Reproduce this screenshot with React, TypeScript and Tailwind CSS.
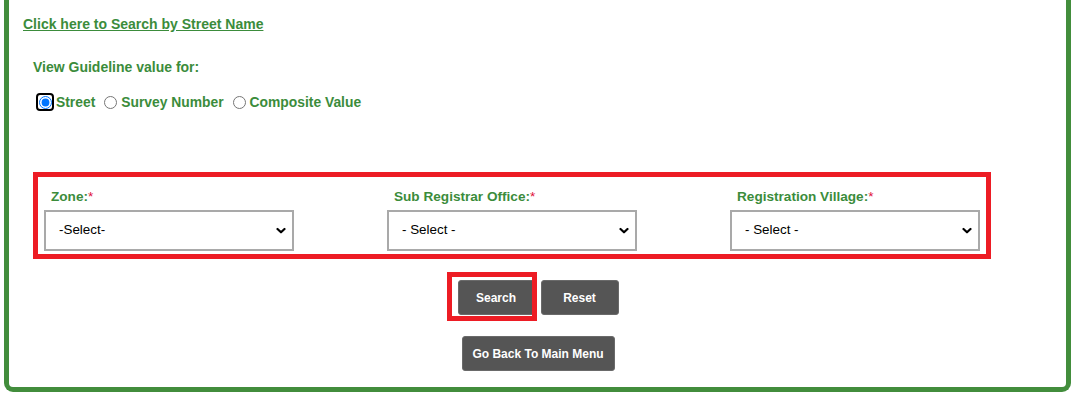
import React from "react";

const font = { fontFamily: '"Liberation Sans", Arial, Helvetica, sans-serif' };

function Chevron() {
  return (
    <svg width="10" height="7" viewBox="0 0 10 7" className="absolute right-[8px] top-1/2 -translate-y-1/2 pointer-events-none">
      <path d="M1.5 1.5 L5 4.8 L8.5 1.5" fill="none" stroke="#000" strokeWidth="2.2" strokeLinecap="round" strokeLinejoin="round" />
    </svg>
  );
}

function Field({ label, placeholder }: { label: string; placeholder: string }) {
  return (
    <div className="flex flex-col">
      <div className="pl-[7px] text-[13.6px] leading-[16px] font-bold text-[#3b8c3b]">
        {label}
        <span className="text-[#e0103a] font-normal">*</span>
      </div>
      <div className="relative mt-[5px] w-[250px] h-[41px]">
        <select
          className="appearance-none w-full h-full border-2 border-[#a9a9a9] bg-white pl-[13px] text-[13.4px] text-black outline-none"
          style={font}
          defaultValue=""
        >
          <option value="">{placeholder}</option>
        </select>
        <Chevron />
      </div>
    </div>
  );
}

export default function App() {
  return (
    <div className="w-[1075px] h-[399px] bg-white overflow-hidden" style={font}>
      <div className="mx-[4px] border-x-[5px] border-b-[5px] border-[#428d3c] rounded-b-[9px] pl-[14px] pb-[16px]">
        <div className="pt-[16px] leading-[16px]">
          <a href="#" className="text-[14px] font-bold text-[#3b8c3b] underline">
            Click here to Search by Street Name
          </a>
        </div>
        <div className="mt-[27px] ml-[10px] text-[14px] leading-[16px] font-bold text-[#3b8c3b]">
          View Guideline value for:
        </div>
        <div className="mt-[17px] ml-[13px] flex items-center h-[20px] text-[13.85px] font-bold text-[#3b8c3b]">
          <span className="inline-flex items-center justify-center w-[18px] h-[18px] border-2 border-black rounded-[4px]">
            <input type="radio" name="gv" defaultChecked className="m-0 w-[13px] h-[13px]" />
          </span>
          <span className="ml-[2px]">Street</span>
          <input type="radio" name="gv" className="m-0 ml-[9px] w-[13px] h-[13px]" />
          <span className="ml-[4px]">Survey Number</span>
          <input type="radio" name="gv" className="m-0 ml-[9px] w-[13px] h-[13px]" />
          <span className="ml-[4px]">Composite Value</span>
        </div>
        <div className="mt-[60px] ml-[10px] w-[958px] border-[5px] border-[#ed1c24] pt-[12px] pb-[3px] pl-[6px] grid grid-cols-[343px_343px_auto]">
          <Field label="Zone:" placeholder="-Select-" />
          <Field label="Sub Registrar Office:" placeholder="- Select -" />
          <Field label="Registration Village:" placeholder="- Select -" />
        </div>
        <div className="mt-[21px] -ml-[13px] flex justify-center gap-[6px]">
          <div className="relative">
            <button className="w-[77px] h-[35px] bg-[#555555] border border-[#6a6a6a] rounded-[3px] text-white text-[12px] font-bold">
              Search
            </button>
            <div className="absolute left-[-11px] top-[-8px] w-[90px] h-[49px] border-[5px] border-[#ed1c24] pointer-events-none" />
          </div>
          <button className="w-[78px] h-[35px] bg-[#555555] border border-[#6a6a6a] rounded-[3px] text-white text-[12px] font-bold">
            Reset
          </button>
        </div>
        <div className="mt-[21px] -ml-[13px] flex justify-center">
          <button className="w-[153px] h-[35px] bg-[#555555] border border-[#6a6a6a] rounded-[3px] text-white text-[12px] font-bold">
            Go Back To Main Menu
          </button>
        </div>
      </div>
    </div>
  );
}
